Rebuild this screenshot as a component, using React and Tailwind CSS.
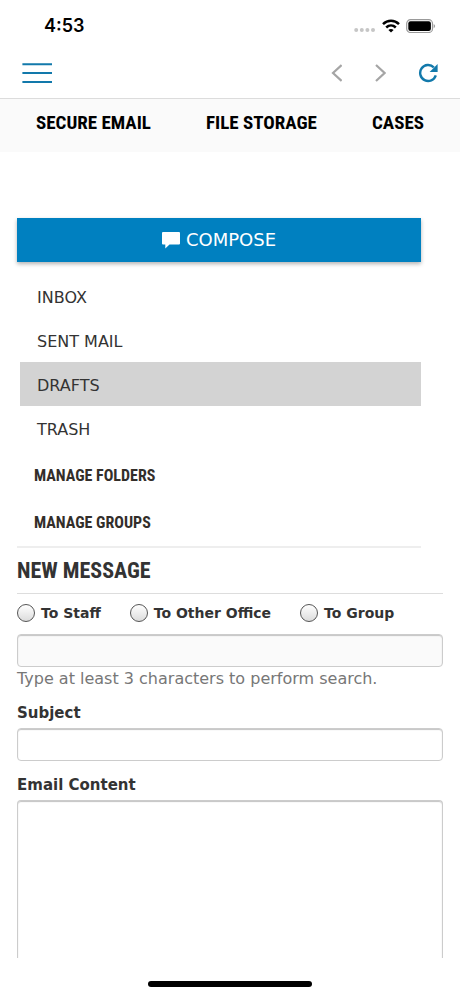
import React, { useState } from 'react';

const NAV_LINKS = ['SECURE EMAIL', 'FILE STORAGE', 'CASES'];

const FOLDERS = ['INBOX', 'SENT MAIL', 'DRAFTS', 'TRASH'];

const MANAGE_LINKS = ['MANAGE FOLDERS', 'MANAGE GROUPS'];

const RECIPIENT_TYPES = [
    { id: 'staff', label: 'To Staff' },
    { id: 'office', label: 'To Other Office' },
    { id: 'group', label: 'To Group' },
];

const HEADING_FONT = "font-['Roboto_Condensed','Liberation_Sans_Narrow',sans-serif]";

const FIELD = 'block w-full rounded border border-[#cccccc] px-2 shadow-[inset_0_1px_1px_#c4c4c4] outline-none';

const StatusBar = () => (
    <div className="flex h-12 items-center justify-between pl-11 pr-6 pt-1">
        <span className="font-['Inter',sans-serif] text-lg font-semibold text-black">4:53</span>
        <div className="flex items-center gap-1.5">
            <svg width="22" height="14" viewBox="0 0 22 14" fill="#c6c6c6" aria-hidden="true">
                <circle cx="2.2" cy="11" r="2" />
                <circle cx="7.8" cy="11" r="2" />
                <circle cx="13.4" cy="11" r="2" />
                <circle cx="19" cy="11" r="2" />
            </svg>
            <svg width="18" height="14" viewBox="0 0 18 14" fill="none" stroke="#000" strokeWidth="2.5" aria-hidden="true">
                <path d="M1 5.2C5.6 .7 12.4 .7 17 5.2" />
                <path d="M4.2 8.5c2.8-2.7 6.8-2.7 9.6 0" />
                <path d="M9 13.5 6.4 10.9c1.5-1.3 3.7-1.3 5.2 0z" fill="#000" stroke="none" />
            </svg>
            <svg width="30" height="14" viewBox="0 0 30 14" aria-hidden="true">
                <rect x=".7" y=".7" width="25.8" height="12.8" rx="3.8" fill="none" stroke="#9a9a9a" strokeWidth="1.2" />
                <rect x="2.3" y="2.3" width="22.6" height="9.6" rx="2.2" fill="#000" />
                <path d="M27.7 5v4.2c1.9-.8 1.9-3.4 0-4.2z" fill="#9a9a9a" />
            </svg>
        </div>
    </div>
);

const Toolbar = () => (
    <div className="flex h-[51px] items-center justify-between border-b border-[#dcdcdc] px-[22px]">
        <button type="button" aria-label="Menu">
            <svg width="30" height="22" viewBox="0 0 30 22" stroke="#1279ab" strokeWidth="2">
                <path d="M.4 2.3H30M.4 11.1H30M.4 19.9H30" />
            </svg>
        </button>
        <div className="flex items-center gap-8">
            <button type="button" aria-label="Back">
                <svg width="12" height="20" viewBox="0 0 12 20" fill="none" stroke="#a5a5a5" strokeWidth="2.2">
                    <path d="M11.6 2 3 10l8.6 8" />
                </svg>
            </button>
            <button type="button" aria-label="Forward">
                <svg width="12" height="20" viewBox="0 0 12 20" fill="none" stroke="#a5a5a5" strokeWidth="2.2">
                    <path d="m2 2 8.6 8L2 18" />
                </svg>
            </button>
            <button type="button" aria-label="Reload">
                <svg width="20" height="20" viewBox="0 0 20 20" fill="none" stroke="#1279ab" strokeWidth="2.4">
                    <path d="M17.8 12.4A8 8 0 1 1 15.8 4.3" />
                    <path d="M19.6 1v8h-8z" fill="#1279ab" stroke="none" />
                </svg>
            </button>
        </div>
    </div>
);

const App = () => {
    const [activeFolder, setActiveFolder] = useState('DRAFTS');
    const [recipientType, setRecipientType] = useState('');
    const [search, setSearch] = useState('');
    const [subject, setSubject] = useState('');
    const [content, setContent] = useState('');

    return (
        <div className="flex min-h-screen flex-col bg-white font-['DejaVu_Sans',sans-serif] text-[#333333]">
            <StatusBar />
            <Toolbar />

            <nav className={`flex h-[53px] items-center justify-between bg-[#fafafa] px-9 pb-1 text-[19px] font-bold text-black ${HEADING_FONT}`}>
                {NAV_LINKS.map(link => (
                    <a key={link} href="#">{link}</a>
                ))}
            </nav>

            <main className="flex flex-1 flex-col px-[17px] pt-[66px]">
                {/* Folders */}
                <div className="mr-[22px] border-b-2 border-[#eeeeee]">
                    <button type="button"
                        className="flex h-11 w-full items-center justify-center gap-1.5 bg-[#0080c0] text-lg text-white shadow-[0_2px_4px_rgba(0,0,0,0.3)]">
                        <svg width="18" height="17" viewBox="0 0 18 17" fill="#fff" aria-hidden="true">
                            <path d="M1 0h16a1 1 0 0 1 1 1v10.5a1 1 0 0 1-1 1H7.5L3.3 16.5V12.5H1a1 1 0 0 1-1-1V1a1 1 0 0 1 1-1z" />
                        </svg>
                        COMPOSE
                    </button>
                    <ul className="ml-[3px] mt-3 text-base">
                        {FOLDERS.map(folder => (
                            <li key={folder}>
                                <button type="button" onClick={() => setActiveFolder(folder)}
                                    className={`flex h-11 w-full items-center pl-[17px] pt-[3px] ${folder === activeFolder ? 'bg-[#d3d3d3]' : ''}`}>
                                    {folder}
                                </button>
                            </li>
                        ))}
                    </ul>
                    <div className={`pl-[17px] pt-0.5 text-base font-bold text-[#332e2a] ${HEADING_FONT}`}>
                        {MANAGE_LINKS.map(link => (
                            <a key={link} href="#" className="flex h-[47px] items-center">{link}</a>
                        ))}
                    </div>
                </div>

                {/* New message */}
                <h1 className={`flex h-[46px] items-center border-b border-[#dddddd] text-[22px] font-bold ${HEADING_FONT}`}>
                    NEW MESSAGE
                </h1>
                <div className="flex h-10 items-center gap-[29px] pb-0.5 text-sm font-bold">
                    {RECIPIENT_TYPES.map(({ id, label }) => (
                        <label key={id} className="flex items-center gap-1.5 whitespace-nowrap">
                            <input type="radio" name="recipient" value={id}
                                checked={recipientType === id}
                                onChange={() => setRecipientType(id)}
                                className="size-[18px] shrink-0 appearance-none rounded-full border border-[#555555] bg-linear-to-b from-white to-[#dcdcdc] checked:border-[5px]" />
                            {label}
                        </label>
                    ))}
                </div>
                <input type="text" aria-label="Search recipients" value={search}
                    onChange={e => setSearch(e.target.value)}
                    className={`h-[33px] bg-[#fafafa] ${FIELD}`} />
                <p className="mt-0.5 text-base leading-5 text-[#777777]">Type at least 3 characters to perform search.</p>

                <label htmlFor="subject" className="mb-[5px] mt-3.5 text-[15px] font-bold leading-5">Subject</label>
                <input id="subject" type="text" value={subject}
                    onChange={e => setSubject(e.target.value)}
                    className={`h-[33px] ${FIELD}`} />

                <label htmlFor="content" className="mb-[5px] mt-3.5 text-[15px] font-bold leading-5">Email Content</label>
                <textarea id="content" value={content}
                    onChange={e => setContent(e.target.value)}
                    className={`min-h-32 flex-1 resize-none rounded-b-none border-b-0 py-2 ${FIELD}`} />
            </main>

            <div className="flex h-[38px] justify-center pt-[23px]">
                <div className="h-1.5 w-[164px] rounded-full bg-black" />
            </div>
        </div>
    );
};

export default App;
